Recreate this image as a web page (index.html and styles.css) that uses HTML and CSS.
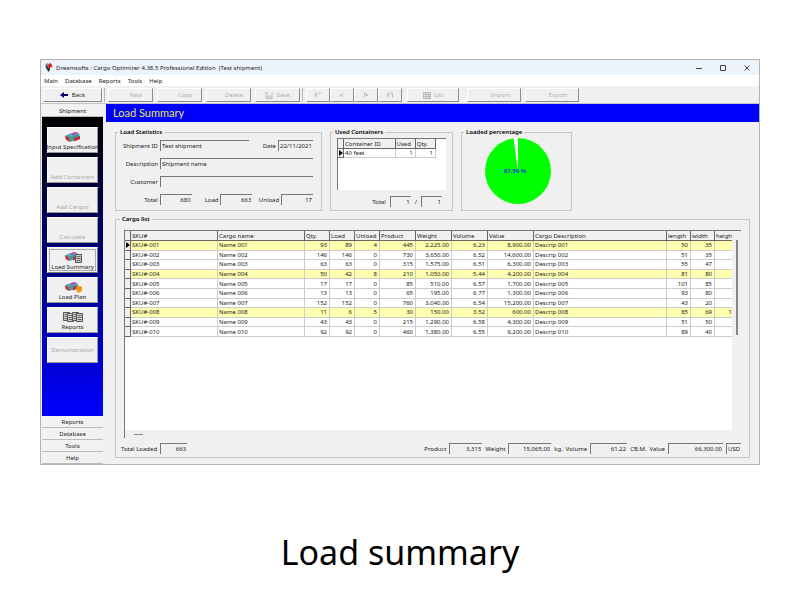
FILE: index.html
```html
<!DOCTYPE html>
<html lang="en">
<head>
  <meta charset="UTF-8" />
  <meta name="viewport" content="width=device-width, initial-scale=1" />
  <title>Load summary</title>
  <link rel="stylesheet" href="styles.css">
</head>
<body>
  <svg class="sprite">
    <symbol id="box" viewBox="0 0 18 12">
      <path d="M1 5 L11 1 L15 2 L5 6 Z" fill="#b83cc8" />
      <path d="M1 5 L6 2.5 L9 4.5 L5 6 Z" fill="#46b9a8" />
      <path d="M5 6 L15 2 L16 7 L6 11 Z" fill="#3f9c98" />
      <path d="M10 7 L16 5 L16 8 L10 10.5 Z" fill="#c32b35" />
      <path d="M1 5 L5 6 L6 11 L2 9 Z" fill="#c0303c" />
    </symbol>
    <symbol id="sheet" viewBox="0 0 7 9">
      <path d="M.5 .5 H6.5 V8.5 H.5 Z" fill="#ccc" stroke="#555" />
      <path d="M1.5 2.5 H5.5 M1.5 4.5 H5.5 M1.5 6.5 H5.5" stroke="#666" />
    </symbol>
  </svg>

  <main class="window">
    <header class="titlebar">
      <svg class="app-icon" viewBox="0 0 9 10">
        <path d="M1 2 L4 3 L5 8 L2 7 Z" fill="#444" />
        <path d="M3 2 L7 0 L9 4 L5 6 Z" fill="#e02020" />
        <path d="M3 6 L6 5 L6 8 L4 10 Z" fill="#333" />
        <path d="M1 2 L3 0 L5 1 L4 3 Z" fill="#5ba3a0" />
      </svg>
      <span class="app-title">Dreamsofts : Cargo Optimizer 4.38.5 Professional Edition &nbsp;(Test shipment)</span>
      <button class="win-btn" aria-label="Minimize"><svg viewBox="0 0 6 6"><path d="M0 3.5 H6" /></svg></button>
      <button class="win-btn" aria-label="Maximize"><svg viewBox="0 0 6 6"><path d="M.5 .5 H5.5 V5.5 H.5 Z" /></svg></button>
      <button class="win-btn" aria-label="Close"><svg viewBox="0 0 6 6"><path d="M.5 .5 L5.5 5.5 M5.5 .5 L.5 5.5" /></svg></button>
    </header>

    <nav class="menubar">
      <a href="#">Main</a>
      <a href="#">Database</a>
      <a href="#">Reports</a>
      <a href="#">Tools</a>
      <a href="#">Help</a>
    </nav>

    <div class="toolbar">
      <button class="tool back">
        <svg viewBox="0 0 8 6"><path d="M0 3 L4 0 V2 H8 V4 H4 V6 Z" fill="#000080" /></svg>
        Back
      </button>
      <span class="sep"></span>
      <div class="tool-group">
        <button class="tool record" disabled>New</button>
        <button class="tool record" disabled>Copy</button>
        <button class="tool record" disabled>Delete</button>
        <button class="tool save" disabled>
          <svg viewBox="0 0 8 8"><path d="M.5 0 V7.5 H7.5 V0 M2.5 7 V4.5 H5.5 V7 M2.5 0 V2" /></svg>
          Save
        </button>
      </div>
      <span class="sep"></span>
      <div class="nav-group">
        <button class="tool nav" disabled aria-label="First"><svg viewBox="0 0 8 6"><path d="M1.5 0 V5 M2 3 L5 .5 M5 .5 H7" /></svg></button>
        <button class="tool nav" disabled aria-label="Previous"><svg viewBox="0 0 8 6"><path d="M1 4 L5 1 M3 3.5 H5" /></svg></button>
        <button class="tool nav" disabled aria-label="Next"><svg viewBox="0 0 8 6"><path d="M2.5 5 V.5 L6 3 H4" /></svg></button>
        <button class="tool nav" disabled aria-label="Last"><svg viewBox="0 0 8 6"><path d="M1.5 5 V.5 L4 3 M6.5 5 V.5 H4" /></svg></button>
      </div>
      <button class="tool list" disabled>
        <svg viewBox="0 0 8 7"><path d="M.5 .5 H7.5 V6.5 H.5 Z M0 2.5 H8 M0 4.5 H8 M3 0 V7 M5.5 0 V7" /></svg>
        List
      </button>
      <div class="tool-group">
        <button class="tool transfer" disabled>Import</button>
        <button class="tool transfer" disabled>Export</button>
      </div>
    </div>

    <div class="workspace">
      <aside class="sidebar">
        <button class="section">Shipment</button>
        <div class="side-panel">
          <button class="side-btn">
            <svg class="pic" viewBox="0 0 18 12"><use href="#box" width="18" height="12" /></svg>
            <span>Input Specification</span>
          </button>
          <button class="side-btn" disabled><span>Add Containers</span></button>
          <button class="side-btn" disabled><span>Add Cargos</span></button>
          <button class="side-btn" disabled><span>Calculate</span></button>
          <button class="side-btn active">
            <svg class="pic" viewBox="0 0 18 12"><use href="#box" width="16" height="11" /><use href="#sheet" x="11" y="3" width="7" height="9" /></svg>
            <span>Load Summary</span>
          </button>
          <button class="side-btn">
            <svg class="pic" viewBox="0 0 18 12"><use href="#box" width="16" height="11" /><path d="M12 6 L15 4.5 L18 6 V10 L15 12 L12 10 Z" fill="#f59a23" /><path d="M12 6 L15 7.500 L18 6" stroke="#c86c10" stroke-width=".5" fill="none" /></svg>
            <span>Load Plan</span>
          </button>
          <button class="side-btn">
            <svg class="pic wide" viewBox="0 0 20 12"><use href="#sheet" x="0" y="1" width="7" height="9" /><use href="#sheet" x="4" y="2" width="7" height="9" /><use href="#sheet" x="9" y="1" width="7" height="9" /><use href="#sheet" x="13" y="2" width="7" height="9" /></svg>
            <span>Reports</span>
          </button>
          <button class="side-btn centered" disabled><span>Demonstration</span></button>
        </div>
        <button class="section">Reports</button>
        <button class="section">Database</button>
        <button class="section">Tools</button>
        <button class="section">Help</button>
      </aside>

      <section class="content">
        <h1>Load Summary</h1>

        <div class="groups">
          <fieldset class="group stats">
            <legend>Load Statistics</legend>
            <div class="row">
              <label class="main" for="shipmentId">Shipment ID</label>
              <input class="grow" id="shipmentId" value="Test shipment" readonly />
              <label class="sub" for="date">Date</label>
              <input class="date" id="date" value="22/11/2021" readonly />
            </div>
            <div class="row">
              <label class="main" for="description">Description</label>
              <input class="grow" id="description" value="Shipment name" readonly />
            </div>
            <div class="row">
              <label class="main" for="customer">Customer</label>
              <input class="grow" id="customer" readonly />
            </div>
            <div class="row">
              <label class="main" for="total">Total</label>
              <input class="short num" id="total" value="680" readonly />
              <label class="sub" for="load">Load</label>
              <input class="short num" id="load" value="663" readonly />
              <label class="sub" for="unload">Unload</label>
              <input class="short num" id="unload" value="17" readonly />
            </div>
          </fieldset>

          <fieldset class="group containers">
            <legend>Used Containers</legend>
            <div class="grid-box">
              <table class="container-table">
                <colgroup><col class="ind"><col class="c-id"><col class="c-used"><col class="c-used"></colgroup>
                <thead>
                  <tr><th></th><th>Container ID</th><th>Used</th><th>Qty.</th></tr>
                </thead>
                <tbody>
                  <tr class="current"><th></th><td>40 feet</td><td class="num">1</td><td class="num">1</td></tr>
                </tbody>
              </table>
            </div>
            <div class="row totals">
              <label for="usedTotal">Total</label>
              <input class="num" id="usedTotal" value="1" readonly />
              <label for="qtyTotal">/</label>
              <input class="num" id="qtyTotal" value="1" readonly />
            </div>
          </fieldset>

          <fieldset class="group percent">
            <legend>Loaded percentage</legend>
            <svg class="pie" viewBox="0 0 66 66">
              <circle cx="33" cy="33" r="33" fill="#00ff00" />
              <path d="M33 33 L28.500 0 L33 0 Z" fill="#fff" />
              <text x="30" y="35" text-anchor="middle">97.50 %</text>
            </svg>
          </fieldset>
        </div>

        <fieldset class="group cargo">
          <legend>Cargo list</legend>
          <div class="cargo-box">
            <div class="cargo-view">
              <table class="cargo-table">
                <colgroup>
                  <col class="ind"><col class="c-name"><col class="c-name"><col class="c-qty"><col class="c-qty"><col class="c-qty">
                  <col class="c-mid"><col class="c-mid"><col class="c-mid"><col class="c-value"><col class="c-desc">
                  <col class="c-size"><col class="c-size"><col>
                </colgroup>
                <thead>
                  <tr>
                    <th></th><th>SKU#</th><th>Cargo name</th><th>Qty.</th><th>Load</th><th>Unload</th><th>Product</th>
                    <th>Weight</th><th>Volume</th><th>Value</th><th>Cargo Description</th><th>length</th><th>width</th><th>height</th>
                  </tr>
                </thead>
                <tbody id="cargoRows"></tbody>
              </table>
            </div>
            <div class="v-scroll"></div>
            <div class="h-scroll"></div>
          </div>

          <div class="footer">
            <label for="totalLoaded">Total Loaded</label>
            <input class="w-loaded num" id="totalLoaded" value="663" readonly />
            <label class="push" for="sumProduct">Product</label>
            <input class="w-product num" id="sumProduct" value="3,315" readonly />
            <label for="sumWeight">Weight</label>
            <input class="w-weight num" id="sumWeight" value="15,065.00" readonly />
            <span class="unit">kg.</span>
            <label for="sumVolume">Volume</label>
            <input class="w-volume num" id="sumVolume" value="61.22" readonly />
            <span class="unit">CB.M.</span>
            <label for="sumValue">Value</label>
            <input class="w-value num" id="sumValue" value="66,300.00" readonly />
            <input class="w-unit" value="USD" aria-label="Currency" readonly />
          </div>
        </fieldset>
      </section>
    </div>
  </main>

  <p class="caption">Load summary</p>

  <script src="script.js"></script>
</body>
</html>
```

FILE: styles.css
```css
* {
  margin: 0;
  padding: 0;
  box-sizing: border-box;
}

body {
  padding: 59px 40px 20px;
  background: #fff;
  color: #222;
  font-family: "Noto Sans", "Open Sans", sans-serif;
  font-size: 6px;
  line-height: 8px;
}

button,
input {
  font: inherit;
  color: inherit;
}

.sprite {
  display: none;
}

.window {
  border: 1px solid #b4b4b4;
  background: #f0f0f0;
}

/* title bar and menu */

.titlebar {
  display: flex;
  align-items: center;
  height: 15px;
  padding-left: 3px;
  background: #edf3fa;
}

.app-icon {
  width: 9px;
  height: 9px;
  margin-right: 3px;
}

.app-title {
  flex: 1;
}

.win-btn {
  display: flex;
  justify-content: center;
  width: 24px;
  border: none;
  background: none;
}

.win-btn svg {
  width: 6px;
  height: 6px;
  fill: none;
  stroke: #444;
}

.menubar {
  display: flex;
  align-items: center;
  gap: 7px;
  height: 11px;
  padding-left: 3px;
  background: #fff;
}

.menubar a {
  color: #222;
  text-decoration: none;
}

/* toolbar */

.toolbar {
  display: flex;
  align-items: center;
  height: 18px;
  padding: 1px 2px 0;
  border-bottom: 1px solid #c4c4c4;
}

.tool {
  display: flex;
  align-items: center;
  justify-content: center;
  gap: 3px;
  height: 14px;
  border: 1px solid;
  border-color: #fff #8c8c8c #8c8c8c #fff;
  background: #f0f0f0;
}

.tool:disabled {
  color: #b0b0b0;
}

.tool svg {
  width: 8px;
  height: 7px;
  fill: none;
  stroke: #b8b8b8;
}

.tool.back {
  width: 59px;
}

.tool.back svg {
  height: 6px;
  margin-right: 1px;
  stroke: none;
}

.sep {
  width: 1px;
  height: 14px;
  margin: 0 3px 0 2px;
  background: #b8b8b8;
}

.tool-group {
  display: flex;
  gap: 4px;
}

.nav-group {
  display: flex;
  margin-right: 5px;
}

.tool.record {
  width: 45px;
  padding-left: 11px;
}

.tool.save {
  width: 45px;
}

.tool.nav {
  width: 24px;
}

.tool.list {
  width: 52px;
  margin-right: 8px;
}

.tool.transfer {
  width: 54px;
  padding-left: 12px;
}

/* sidebar */

.workspace {
  display: flex;
}

.sidebar {
  display: flex;
  flex-direction: column;
  width: 63px;
  padding: 1px 1px 0;
}

.section {
  height: 12px;
  border: none;
  border-bottom: 1px solid #bbb;
  background: #f2f2f2;
}

.side-panel {
  flex: 1;
  display: flex;
  flex-direction: column;
  gap: 4px;
  padding: 10px 5px;
  background: linear-gradient(#000, #0000ff);
}

.side-btn {
  display: flex;
  flex-direction: column;
  align-items: center;
  justify-content: flex-end;
  height: 26px;
  padding-bottom: 1px;
  border: 1px solid;
  border-color: #fff #999 #999 #fff;
  background: #f0f0f0;
  white-space: nowrap;
}

.side-btn:disabled {
  color: #aaa;
}

.side-btn.active {
  border-color: #fff #777 #777 #fff;
  outline: 1px solid #aaa;
  outline-offset: -3px;
}

.side-btn.centered {
  justify-content: center;
}

.pic {
  width: 18px;
  height: 12px;
}

.pic.wide {
  width: 20px;
}

/* content */

.content {
  flex: 1;
  min-width: 0;
  padding-left: 2px;
}

h1 {
  padding-left: 7px;
  background: #0000ff;
  color: #e6e650;
  font-family: Lato, "Noto Sans", sans-serif;
  font-size: 11px;
  font-weight: 400;
  line-height: 18px;
}

.groups {
  display: flex;
  gap: 8px;
  padding: 6px 9px 4px;
}

.group {
  border: 1px solid #c6c6c6;
  min-width: 0;
}

legend {
  margin-left: 2px;
  padding: 0 2px;
  color: #000;
  font-weight: 600;
}

.row {
  display: flex;
  align-items: center;
  gap: 2px;
  height: 11px;
  margin-bottom: 7px;
}

input {
  min-width: 0;
  height: 11px;
  padding: 0 1px 1px;
  border: none;
  border-top: 1px solid #777;
  border-left: 1px solid #777;
  background: #f0f0f0;
  outline: none;
}

.num {
  text-align: right;
}

.stats {
  width: 207px;
  padding: 4px 8px 0 0;
}

.stats .row:last-child {
  margin-bottom: 5px;
}

.stats .main {
  width: 42px;
  text-align: right;
}

.stats .sub {
  width: 25px;
  text-align: right;
}

.grow {
  flex: 1;
}

.short {
  width: 32px;
}

.date {
  width: 35px;
}

.containers {
  width: 123px;
  padding: 2px 6px 0;
}

.containers legend,
.cargo legend {
  margin-left: -4px;
}

.grid-box {
  height: 52px;
  border-top: 1px solid #777;
  border-left: 1px solid #777;
  background: #fff;
}

.totals {
  justify-content: flex-end;
  gap: 4px;
  margin: 6px 4px 0 0;
}

.totals input {
  width: 21px;
}

.percent {
  width: 111px;
}

.pie {
  display: block;
  width: 66px;
  height: 66px;
  margin: 2px 0 0 23px;
}

.pie text {
  font-size: 6px;
  font-weight: 700;
  fill: #0044cc;
}

/* tables */

table {
  table-layout: fixed;
  border-collapse: separate;
  border-spacing: 0;
}

th,
td {
  padding: 0 1px;
  border-right: 1px solid #ccc;
  border-bottom: 1px solid #ccc;
  font-weight: 400;
  line-height: 8px;
  text-align: left;
  white-space: nowrap;
}

td.num {
  padding-right: 2px;
  text-align: right;
}

thead th,
tbody th {
  border-color: #666;
  background: #f0f0f0;
}

thead th {
  height: 10px;
}

.highlight td {
  background: #ffffb0;
}

td.height {
  padding-right: 0;
  border-right: none;
  text-align: right;
}

thead th:last-child {
  border-right: none;
}

/* record pointer of the selected row */
.current th::before {
  content: "";
  display: block;
  width: 0;
  border: solid transparent;
  border-width: 3px 0 3px 4px;
  border-left-color: #000;
}

.ind {
  width: 6px;
}

.container-table {
  width: 98px;
}

.container-table thead th:last-child {
  border-right: 1px solid #666;
}

.c-id {
  width: 51px;
}

.c-used {
  width: 20px;
}

.cargo {
  margin: 0 9px 6px;
  padding: 7px 8px 3px;
}

.cargo-box {
  display: grid;
  grid-template-columns: 1fr 9px;
  grid-template-rows: 199px 8px;
  border-top: 1px solid #777;
  border-left: 1px solid #777;
}

.cargo-view {
  background: #fff;
  overflow: hidden;
}

.cargo-table {
  width: 100%;
  height: 106px;
}

.c-name {
  width: 87px;
}

.c-qty {
  width: 25px;
}

.c-size {
  width: 24px;
}

.c-mid {
  width: 36px;
}

.c-value {
  width: 46px;
}

.c-desc {
  width: 133px;
}

.v-scroll {
  width: 2px;
  height: 95px;
  margin: 9px 0 0 4px;
  background: #888;
}

.h-scroll {
  width: 9px;
  height: 1px;
  margin: 4px 0 0 9px;
  background: #888;
}

.footer {
  display: flex;
  align-items: center;
  gap: 3px;
  margin: 5px 0 0 -3px;
}

.push {
  margin-left: auto;
}

.w-loaded {
  width: 27px;
}

.w-product {
  width: 33px;
}

.w-weight {
  width: 43px;
}

.w-volume {
  width: 37px;
}

.w-value {
  width: 55px;
}

.w-unit {
  width: 15px;
}

.caption {
  margin-top: 63px;
  color: #000;
  font-size: 34px;
  line-height: 48px;
  text-align: center;
}
```

FILE: script.js
```javascript
const cargos = [
  ["001", 93, 89, 4, 445, "2,225.00", "6.23", "8,900.00", 50, 35, ""],
  ["002", 146, 146, 0, 730, "3,650.00", "6.52", "14,600.00", 51, 35, ""],
  ["003", 63, 63, 0, 315, "1,575.00", "6.51", "6,300.00", 55, 47, ""],
  ["004", 50, 42, 8, 210, "1,050.00", "5.44", "4,200.00", 81, 80, ""],
  ["005", 17, 17, 0, 85, "510.00", "6.57", "1,700.00", 101, 85, ""],
  ["006", 13, 13, 0, 65, "195.00", "6.77", "1,300.00", 93, 80, ""],
  ["007", 152, 152, 0, 760, "3,040.00", "6.54", "15,200.00", 43, 20, ""],
  ["008", 11, 6, 5, 30, "150.00", "3.52", "600.00", 85, 69, "1"],
  ["009", 43, 43, 0, 215, "1,290.00", "6.58", "4,300.00", 51, 50, ""],
  ["010", 92, 92, 0, 460, "1,380.00", "6.55", "9,200.00", 89, 40, ""]
];

const num = v => `<td class="num">${v}</td>`;

document.getElementById("cargoRows").innerHTML = cargos.map((c, i) => {
  const classes = [];
  if (i === 0) classes.push("current");
  if (c[3] > 0) classes.push("highlight");

  return `<tr class="${classes.join(" ")}"><th></th>
    <td>SKU#-${c[0]}</td><td>Name ${c[0]}</td>
    ${c.slice(1, 8).map(num).join("")}
    <td>Descrip ${c[0]}</td>
    ${c.slice(8, 10).map(num).join("")}
    <td class="height">${c[10]}</td></tr>`;
}).join("");
```
